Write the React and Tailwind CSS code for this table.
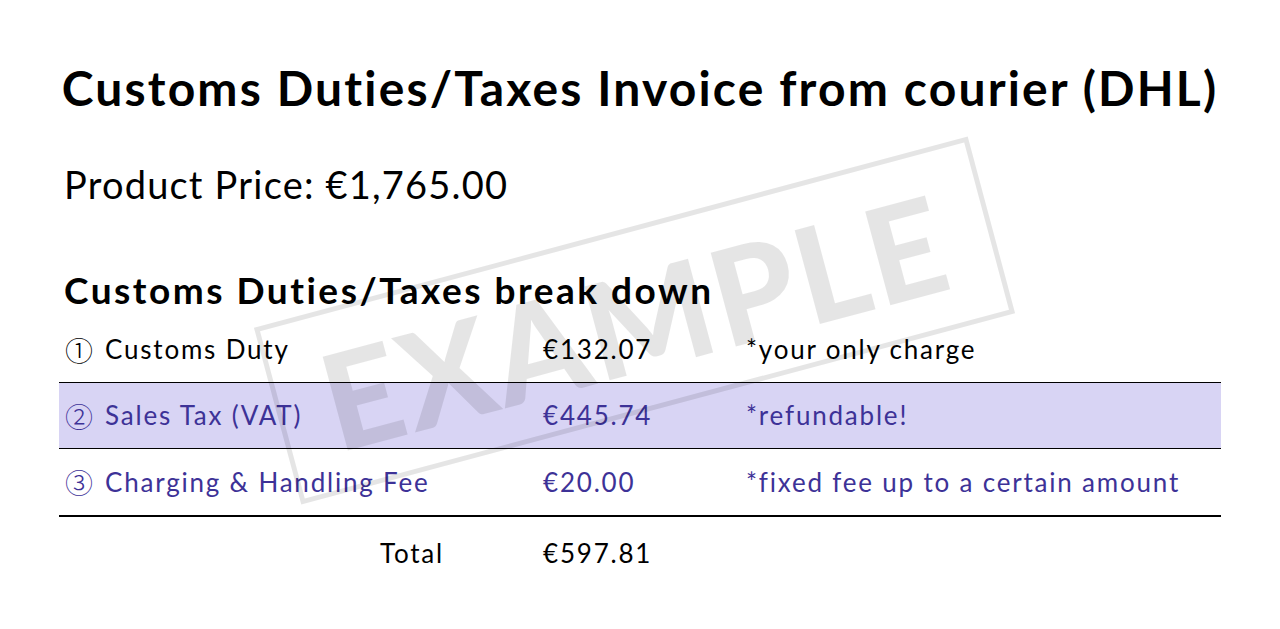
const rows = [
  { num: '①', label: 'Customs Duty', amount: '€132.07', note: '*your only charge', tone: 'plain', h: 'h-[66px] border-b' },
  { num: '②', label: 'Sales Tax (VAT)', amount: '€445.74', note: '*refundable!', tone: 'highlight', h: 'h-[66px] border-b' },
  { num: '③', label: 'Charging & Handling Fee', amount: '€20.00', note: '*fixed fee up to a certain amount', tone: 'purple', h: 'h-[68px] border-b-2' },
];

const rowStyle = (tone) => {
  if (tone === 'highlight') return 'bg-[#d8d4f4] text-[#3d3297]';
  if (tone === 'purple') return 'text-[#3d3297]';
  return 'text-black';
};

function Stamp() {
  return (
    <div className="pointer-events-none absolute left-[265px] top-[229px] flex h-[183px] w-[739px] -rotate-[15deg] items-center justify-center border-[5px] border-black/10">
      <span className="text-[134px] font-black leading-none tracking-[3px] text-black/10">EXAMPLE</span>
    </div>
  );
}

export default function App() {
  return (
    <div className="relative h-[629px] overflow-hidden bg-white px-[59px] pt-[64px] font-['Lato',sans-serif] text-black [font-variant-ligatures:none]">
      <h1 className="whitespace-nowrap text-center text-[48px] font-bold leading-none tracking-[2.15px]">Customs Duties/Taxes Invoice from courier (DHL)</h1>

      <p className="mt-[53px] pl-[5px] text-[38px] leading-none tracking-[1.2px]">Product Price: €1,765.00</p>

      <h2 className="mt-[68px] pl-[5px] text-[37px] font-bold leading-none tracking-[2.5px]">Customs Duties/Taxes break down</h2>

      <div className="mt-[9px] text-[26px] tracking-[1.8px]">
        {rows.map((r) => (
          <div key={r.label} className={`grid grid-cols-[484px_203px_1fr] items-center border-black ${r.h} ${rowStyle(r.tone)}`}>
            <div className="flex items-center gap-[12px] pl-[6px]">
              <span className="font-['Noto_Sans_CJK_JP',sans-serif] text-[28px] font-light tracking-normal">{r.num}</span>
              <span>{r.label}</span>
            </div>
            <span>{r.amount}</span>
            <span>{r.note}</span>
          </div>
        ))}
        <div className="grid h-[72px] grid-cols-[484px_203px_1fr] items-center">
          <span className="pr-[99px] text-right">Total</span>
          <span>€597.81</span>
          <span />
        </div>
      </div>

      <Stamp />
    </div>
  );
}
